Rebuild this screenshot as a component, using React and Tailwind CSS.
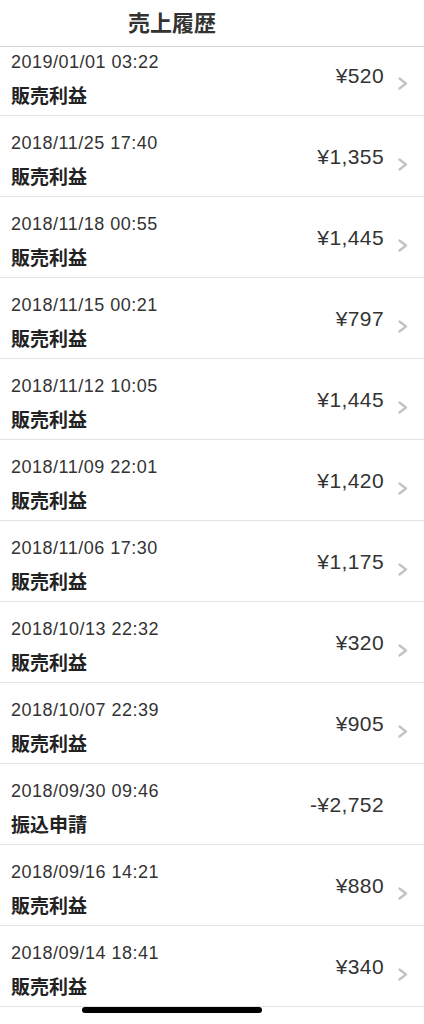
const sales = [
  { date: "2019/01/01 03:22", label: "販売利益", amount: "¥520", link: true },
  { date: "2018/11/25 17:40", label: "販売利益", amount: "¥1,355", link: true },
  { date: "2018/11/18 00:55", label: "販売利益", amount: "¥1,445", link: true },
  { date: "2018/11/15 00:21", label: "販売利益", amount: "¥797", link: true },
  { date: "2018/11/12 10:05", label: "販売利益", amount: "¥1,445", link: true },
  { date: "2018/11/09 22:01", label: "販売利益", amount: "¥1,420", link: true },
  { date: "2018/11/06 17:30", label: "販売利益", amount: "¥1,175", link: true },
  { date: "2018/10/13 22:32", label: "販売利益", amount: "¥320", link: true },
  { date: "2018/10/07 22:39", label: "販売利益", amount: "¥905", link: true },
  { date: "2018/09/30 09:46", label: "振込申請", amount: "-¥2,752", link: false },
  { date: "2018/09/16 14:21", label: "販売利益", amount: "¥880", link: true },
  { date: "2018/09/14 18:41", label: "販売利益", amount: "¥340", link: true },
];

const font = { fontFamily: '"Liberation Sans", "Noto Sans CJK JP", sans-serif' };
const cjk = { fontFamily: '"Noto Sans CJK JP", sans-serif' };

function Chevron({ hidden }) {
  return (
    <svg
      width="11"
      height="13"
      viewBox="0 0 11 13"
      className={hidden ? "invisible" : ""}
    >
      <polyline
        points="2.5,1.5 9,6.5 2.5,11.5"
        fill="none"
        stroke="#c2c2c6"
        strokeWidth="2.3"
        strokeLinecap="round"
        strokeLinejoin="round"
      />
    </svg>
  );
}

function SaleRow({ item }) {
  return (
    <li className="flex h-[81px] border-b border-[#e3e3e3] bg-white">
      <div className="flex-1 pl-[11px] pt-[15px]">
        <div className="text-[18px] leading-[24px] tracking-[0.5px] text-[#333333]">
          {item.date}
        </div>
        <div
          className="mt-[8px] text-[19px] leading-[26px] font-bold text-[#222222]"
          style={cjk}
        >
          {item.label}
        </div>
      </div>
      <div className="flex items-start pr-[16px] pt-[29px]">
        <span className="text-[21px] leading-[24px] tracking-[0.4px] text-[#333333]">
          {item.amount}
        </span>
        <span className="ml-[13px] mt-[13px]">
          <Chevron hidden={!item.link} />
        </span>
      </div>
    </li>
  );
}

export default function App() {
  return (
    <div className="relative h-[1024px] w-[424px] overflow-hidden bg-white" style={font}>
      <header className="relative z-10 h-[47px] border-b border-[#d6d6d6] bg-white pt-[7px] pr-[80px] text-center">
        <h1 className="text-[22px] leading-[28px] font-bold text-[#333333]" style={cjk}>
          売上履歴
        </h1>
      </header>
      <div className="h-[977px] overflow-hidden">
        <ul className="-mt-[12px]">
          {sales.map((item) => (
            <SaleRow key={item.date} item={item} />
          ))}
        </ul>
      </div>
      <div className="absolute left-[82px] top-[1007px] h-[6px] w-[180px] rounded-full bg-black" />
    </div>
  );
}
